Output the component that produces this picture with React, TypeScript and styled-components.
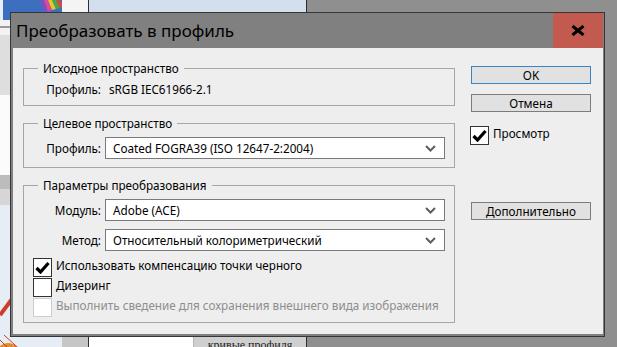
import React from "react";
import styled, { createGlobalStyle } from "styled-components";

const GlobalStyle = createGlobalStyle`
  html, body { margin: 0; padding: 0; }
  body {
    width: 617px; height: 347px; overflow: hidden; background: #8f8f8f;
    font-family: "Noto Sans", "Open Sans", "DejaVu Sans", sans-serif;
  }
  * { box-sizing: border-box; }
`;

const Desktop = styled.div`
  position: relative;
  width: 617px;
  height: 347px;
  overflow: hidden;
  background: #8f8f8f;
`;

/* ---------- background application (partially hidden) ---------- */
const BackWindow = styled.div`
  position: absolute;
  left: 0;
  top: 0;
  width: 307px;
  height: 347px;
  display: flex;
  border-right: 1px solid #2c2c2c;
  background: #d3dfed;
`;

const BackSide = styled.div`
  width: 62px;
  display: flex;
  flex-direction: column;
`;

const BackBlock = styled.div<{ $h: number; $bg: string }>`
  height: ${(p) => p.$h}px;
  background: ${(p) => p.$bg};
  flex: none;
`;

const BackArt = styled.div`
  flex: 1;
  background: #e4ebf3;
  overflow: hidden;
`;

const BackGutter = styled.div`
  width: 27px;
  background: #c6c6c6;
  border-right: 1px solid #2f2f2f;
  display: flex;
  flex-direction: column;
`;

const BackMain = styled.div`
  flex: 1;
  display: flex;
  flex-direction: column;
  justify-content: space-between;
`;

const BackTop = styled.div`
  height: 12px;
  background: #d3dfed;
`;

const BackBottom = styled.div`
  height: 11px;
  display: flex;
  background: #ffffff;
`;

const BackCanvas = styled.div`
  width: 105px;
  background: #ffffff;
  border-right: 1px solid #b5b5b5;
`;

const BackButton = styled.div`
  flex: 1;
  background: #cfcfcf;
  font-family: "Liberation Serif", serif;
  font-size: 12px;
  line-height: 12px;
  padding-top: 3px;
  text-align: center;
  color: #222;
  overflow: hidden;
  white-space: nowrap;
`;

/* ---------- dialog ---------- */
const Window = styled.div`
  position: absolute;
  left: 10px;
  top: 12px;
  width: 595px;
  height: 325px;
  border: 1px solid #363636;
  background: #808080;
  padding: 0 1px 2px 2px;
  display: flex;
  flex-direction: column;
`;

const TitleBar = styled.div`
  height: 35px;
  flex: none;
  display: flex;
  align-items: center;
  justify-content: space-between;
`;

const Title = styled.div`
  font-size: 17px;
  color: #000;
  padding-left: 3px;
  padding-bottom: 1px;
`;

const CloseButton = styled.div`
  width: 50px;
  height: 35px;
  background: #c25a4f;
  display: flex;
  align-items: center;
  justify-content: center;
`;

const Body = styled.div`
  flex: 1;
  background: #eeeeee;
  display: flex;
  padding: 12px 10px 0 10px;
  font-size: 11.7px;
  color: #000;
  white-space: nowrap;
`;

const LeftColumn = styled.div`
  width: 432px;
  display: flex;
  flex-direction: column;
  gap: 9px;
`;

const Group = styled.fieldset<{ $pt: number; $pb: number }>`
  margin: 0;
  border: 1px solid #a6a6a6;
  padding: ${(p) => p.$pt}px 9px ${(p) => p.$pb}px 0;
  min-width: 0;
  display: flex;
  flex-direction: column;
`;

const Legend = styled.legend`
  margin-left: 14px;
  padding: 0 5px;
  line-height: 16px;
  font-size: 11.7px;
`;

const FieldRow = styled.div<{ $mt?: number }>`
  display: flex;
  align-items: center;
  height: 22px;
  margin-top: ${(p) => p.$mt ?? 0}px;
`;

const FieldLabel = styled.div`
  width: 77px;
  text-align: right;
  flex: none;
`;

const FieldValue = styled.div`
  margin-left: 8px;
`;

const Select = styled.div`
  margin-left: 4px;
  flex: 1;
  height: 22px;
  background: #ffffff;
  border: 1px solid #7a7a7a;
  display: flex;
  align-items: center;
  justify-content: space-between;
  padding: 0 8px 0 7px;
`;

const CheckRow = styled.div<{ $disabled?: boolean; $mt?: number }>`
  display: flex;
  align-items: center;
  height: 20px;
  margin-left: 9px;
  margin-top: ${(p) => p.$mt ?? 0}px;
  color: ${(p) => (p.$disabled ? "#8d8d8d" : "#000")};
`;

const CheckText = styled.span`
  padding-bottom: 4px;
`;

const CheckBox = styled.div<{ $disabled?: boolean }>`
  width: 19px;
  height: 19px;
  flex: none;
  background: #ffffff;
  border: 1px solid ${(p) => (p.$disabled ? "#cdcdcd" : "#333333")};
  display: flex;
  align-items: center;
  justify-content: center;
  margin-right: 4px;
`;

const RightColumn = styled.div`
  width: 120px;
  margin-left: 16px;
  display: flex;
  flex-direction: column;
`;

const Button = styled.div<{ $primary?: boolean; $mt: number }>`
  height: 18px;
  margin-top: ${(p) => p.$mt}px;
  background: #e1e1e1;
  border: 1px solid ${(p) => (p.$primary ? "#3a84c4" : "#7c7c7c")};
  display: flex;
  align-items: center;
  justify-content: center;
`;

const PreviewRow = styled.div`
  display: flex;
  align-items: center;
  margin-top: 13px;
  margin-left: -1px;
`;

const Check = () => (
  <svg width="15" height="13" viewBox="0 0 15 13">
    <path d="M1.5 7 L5.5 11 L13.5 2" fill="none" stroke="#000" strokeWidth="3.2" />
  </svg>
);

const Chevron = () => (
  <svg width="11" height="7" viewBox="0 0 11 7">
    <path d="M1 1 L5.5 5.5 L10 1" fill="none" stroke="#5e5e5e" strokeWidth="2" />
  </svg>
);

const CloseX = () => (
  <svg width="14" height="11" viewBox="0 0 14 11">
    <path d="M1.5 1 L12.5 10 M12.5 1 L1.5 10" stroke="#000" strokeWidth="3" />
  </svg>
);

const BackImage = () => (
  <svg width="62" height="35" viewBox="0 0 62 35">
    <rect width="62" height="35" fill="#3d6fbf" />
    <rect x="0" y="0" width="3" height="35" fill="#e8eef6" />
    <path d="M40 0 L44 0 L48 12 L44 12 Z" fill="#7a4fbf" />
    <path d="M44 0 L48 0 L52 10 L48 12 Z" fill="#d84a9a" />
    <path d="M48 0 L52 0 L56 9 L52 10 Z" fill="#f0c030" />
    <path d="M52 0 L56 0 L60 8 L56 9 Z" fill="#3fae4a" />
    <path d="M56 0 L60 0 L62 4 L62 7 L60 8 Z" fill="#e0463a" />
    <rect x="0" y="20" width="62" height="15" fill="#f2f2f2" />
    <rect x="0" y="26" width="30" height="2" fill="#9a9a9a" />
  </svg>
);

const BackDrawing = () => (
  <svg width="62" height="160" viewBox="0 0 62 160">
    <rect width="62" height="160" fill="#e6edf5" />
    <path d="M0 110 L30 70" stroke="#d03a2a" strokeWidth="4" />
    <circle cx="8" cy="150" r="12" fill="#e58a2a" />
    <path d="M0 135 L20 155 M4 130 L26 150" stroke="#c2422c" strokeWidth="1" />
  </svg>
);

export default function App() {
  return (
    <>
      <GlobalStyle />
      <Desktop>
        <BackWindow>
          <BackSide>
            <BackImage />
            <BackBlock $h={60} $bg="#dedede" />
            <BackBlock $h={80} $bg="#fbfbfb" />
            <BackBlock $h={14} $bg="#bcbcbc" />
            <BackBlock $h={16} $bg="#d6d6d6" />
            <BackArt>
              <BackDrawing />
            </BackArt>
          </BackSide>
          <BackGutter>
            <BackBlock $h={35} $bg="#f4f4f4" />
          </BackGutter>
          <BackMain>
            <BackTop />
            <BackBottom>
              <BackCanvas />
              <BackButton>кривые профиля</BackButton>
            </BackBottom>
          </BackMain>
        </BackWindow>

        <Window>
          <TitleBar>
            <Title>Преобразовать в профиль</Title>
            <CloseButton>
              <CloseX />
            </CloseButton>
          </TitleBar>
          <Body>
            <LeftColumn>
              <Group $pt={2} $pb={5}>
                <Legend>Исходное пространство</Legend>
                <FieldRow>
                  <FieldLabel>Профиль:</FieldLabel>
                  <FieldValue>sRGB IEC61966-2.1</FieldValue>
                </FieldRow>
              </Group>

              <Group $pt={6} $pb={8}>
                <Legend>Целевое пространство</Legend>
                <FieldRow>
                  <FieldLabel>Профиль:</FieldLabel>
                  <Select>
                    <span>Coated FOGRA39 (ISO 12647-2:2004)</span>
                    <Chevron />
                  </Select>
                </FieldRow>
              </Group>

              <Group $pt={6} $pb={5}>
                <Legend>Параметры преобразования</Legend>
                <FieldRow>
                  <FieldLabel>Модуль:</FieldLabel>
                  <Select>
                    <span>Adobe (ACE)</span>
                    <Chevron />
                  </Select>
                </FieldRow>
                <FieldRow $mt={8}>
                  <FieldLabel>Метод:</FieldLabel>
                  <Select>
                    <span>Относительный колориметрический</span>
                    <Chevron />
                  </Select>
                </FieldRow>
                <CheckRow $mt={6}>
                  <CheckBox>
                    <Check />
                  </CheckBox>
                  <CheckText>Использовать компенсацию точки черного</CheckText>
                </CheckRow>
                <CheckRow>
                  <CheckBox />
                  <CheckText>Дизеринг</CheckText>
                </CheckRow>
                <CheckRow $disabled>
                  <CheckBox $disabled />
                  <CheckText>Выполнить сведение для сохранения внешнего вида изображения</CheckText>
                </CheckRow>
              </Group>
            </LeftColumn>

            <RightColumn>
              <Button $primary $mt={6}>OK</Button>
              <Button $mt={10}>Отмена</Button>
              <PreviewRow>
                <CheckBox>
                  <Check />
                </CheckBox>
                <CheckText>Просмотр</CheckText>
              </PreviewRow>
              <Button $mt={57}>Дополнительно</Button>
            </RightColumn>
          </Body>
        </Window>
      </Desktop>
    </>
  );
}
